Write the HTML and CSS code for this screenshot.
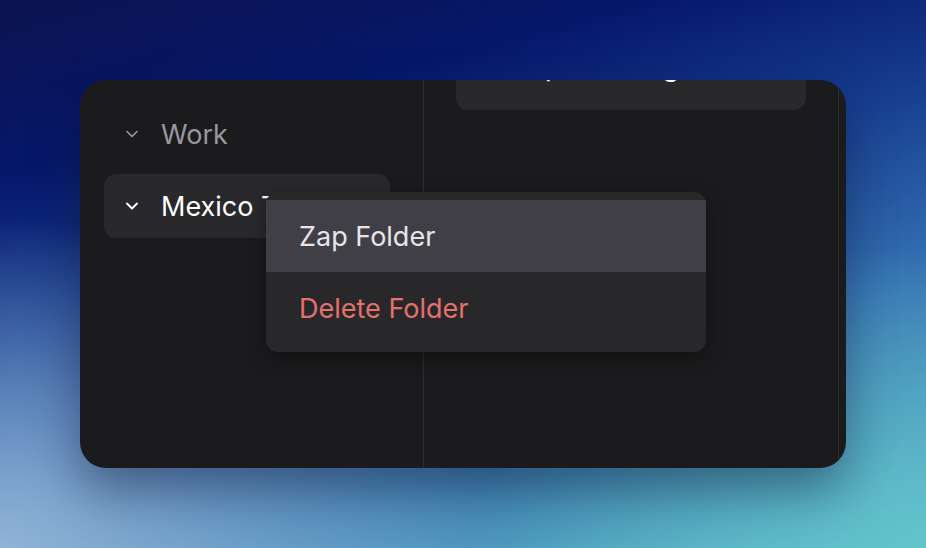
FILE: index.html
```html
<!DOCTYPE html>
<html lang="en">
<head>
<meta charset="utf-8">
<title>Folders</title>
<link rel="stylesheet" href="styles.css">
</head>
<body>
<div class="stage">
  <div class="window">
    <aside class="sidebar">
      <div class="row">
        <svg class="chev" viewBox="0 0 16 10" width="16" height="10"><path d="M3 2.5 L8 7.5 L13 2.5" fill="none" stroke="currentColor" stroke-width="1.6" stroke-linecap="round" stroke-linejoin="round"/></svg>
        <span class="label">Work</span>
      </div>
      <div class="row row-active">
        <svg class="chev" viewBox="0 0 16 10" width="16" height="10"><path d="M3 2.5 L8 7.5 L13 2.5" fill="none" stroke="currentColor" stroke-width="2" stroke-linecap="round" stroke-linejoin="round"/></svg>
        <span class="label">Mexico Trip</span>
      </div>
    </aside>
    <main class="main">
      <div class="card"><span class="card-title">Trip Planning</span></div>
    </main>
    <div class="track"></div>
    <div class="menu">
      <div class="item item-hover">Zap Folder</div>
      <div class="item item-danger">Delete Folder</div>
    </div>
  </div>
</div>
</body>
</html>
```
FILE: styles.css
```css
* { box-sizing: border-box; }
html, body { margin: 0; height: 100%; }
body {
  font-family: Inter, "Noto Sans", "Liberation Sans", sans-serif;
  overflow: hidden;
}
.stage {
  width: 926px;
  height: 548px;
  padding: 80px 80px 0 80px;
  background:
    radial-gradient(ellipse 55% 60% at 0% 100%, rgba(160,190,220,0.85), rgba(160,190,220,0) 100%),
    radial-gradient(ellipse 50% 55% at 100% 100%, rgba(100,200,205,0.8), rgba(100,200,205,0) 100%),
    linear-gradient(165deg, #0c1350 0%, #06176a 22%, #173e90 42%, #3470b2 65%, #4a94bb 85%, #5cb6c6 100%);
}
.window {
  position: relative;
  width: 766px;
  height: 388px;
  background: #1b1b1d;
  border-radius: 26px;
  display: flex;
  overflow: hidden;
  box-shadow: 0 22px 50px rgba(10, 20, 50, 0.45);
}
.sidebar {
  width: 344px;
  border-right: 1px solid #2d2d30;
  padding: 22px 32px 0 24px;
  display: flex;
  flex-direction: column;
  gap: 8px;
}
.row {
  height: 64px;
  display: flex;
  align-items: center;
  padding-left: 20px;
  border-radius: 12px;
  color: #98989f;
}
.row-active {
  background: #29292c;
  color: #ffffff;
  width: 286px;
}
.chev { flex: none; }
.label {
  margin-left: 21px;
  font-size: 27px;
  white-space: nowrap;
}
.main {
  flex: 1;
  padding: 0 32px;
}
.card {
  margin-top: -60px;
  height: 90px;
  background: #29292b;
  border-radius: 12px;
  padding: 33px 0 0 56px;
}
.card-title {
  display: block;
  color: #ffffff;
  font-size: 27px;
  line-height: 1;
}
.track {
  width: 8px;
  border-left: 1px solid #2c2c2f;
}
.menu {
  position: absolute;
  left: 186px;
  top: 112px;
  width: 440px;
  padding: 8px 0;
  background: #28282b;
  border-radius: 12px;
  box-shadow: 0 6px 20px rgba(0,0,0,0.35);
}
.item {
  height: 72px;
  display: flex;
  align-items: center;
  padding-left: 33px;
  font-size: 27px;
  color: #e6e6ea;
}
.item-hover { background: #403f46; }
.item-danger { color: #e5716c; }
```
